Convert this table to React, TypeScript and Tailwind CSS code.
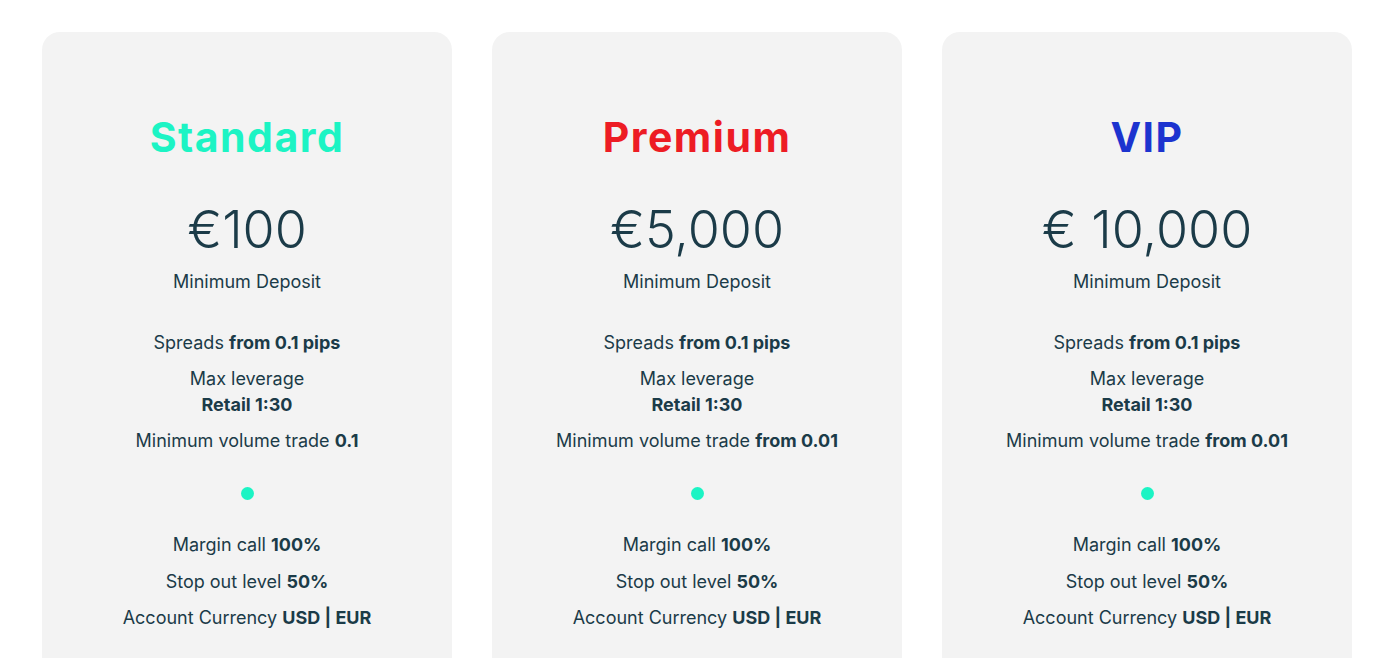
import React from 'react';

interface Plan {
  name: string;
  color: string;
  price: string;
  volume: string;
}

const plans: Plan[] = [
  { name: 'Standard', color: 'text-[#1cf4c4]', price: '€100', volume: '0.1' },
  { name: 'Premium', color: 'text-[#ed1c24]', price: '€5,000', volume: 'from 0.01' },
  { name: 'VIP', color: 'text-[#1c33cf]', price: '€ 10,000', volume: 'from 0.01' },
];

function PlanCard({ plan }: { plan: Plan }) {
  return (
    <div className="w-[410px] shrink-0 rounded-[18px] bg-[#f3f3f3] pt-[81px] pb-20 flex flex-col items-center text-center text-[#1b3b48]">
      <h2 className={`text-[41px] leading-[48px] font-bold tracking-[1.5px] ${plan.color}`}>{plan.name}</h2>

      <div className="mt-[38px] text-[52px] leading-[62px] font-light">{plan.price}</div>
      <p className="mt-[8px] text-[18px] leading-[26px]">Minimum Deposit</p>

      <div className="mt-[35px] flex flex-col items-center gap-[10px] text-[18px] leading-[26px]">
        <p>
          Spreads <b className="font-bold">from 0.1 pips</b>
        </p>
        <p>
          Max leverage
          <br />
          <b className="font-bold">Retail 1:30</b>
        </p>
        <p>
          Minimum volume trade <b className="font-bold">{plan.volume}</b>
        </p>
      </div>

      <span className="mt-[33px] w-[13px] h-[13px] rounded-full bg-[#1cf4c4]" />

      <div className="mt-[32px] flex flex-col items-center gap-[10.5px] text-[18px] leading-[26px]">
        <p>
          Margin call <b className="font-bold">100%</b>
        </p>
        <p>
          Stop out level <b className="font-bold">50%</b>
        </p>
        <p>
          Account Currency <b className="font-bold">USD | EUR</b>
        </p>
      </div>
    </div>
  );
}

export default function App() {
  return (
    <div className="bg-white h-[658px] overflow-hidden" style={{ fontFamily: 'Inter, "Noto Sans", sans-serif' }}>
      <div className="flex gap-10 pl-[42px] pt-8">
        {plans.map((plan) => (
          <PlanCard key={plan.name} plan={plan} />
        ))}
      </div>
    </div>
  );
}
